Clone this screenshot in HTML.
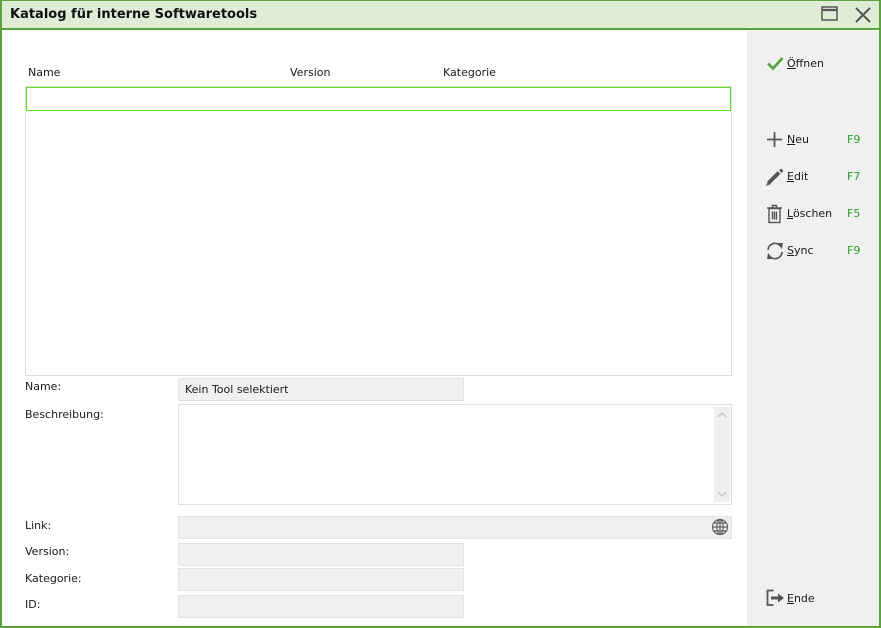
<!DOCTYPE html>
<html><head><meta charset="utf-8"><style>
*{box-sizing:border-box;margin:0;padding:0}
body{width:881px;height:628px;background:#fff;font-family:"DejaVu Sans","Liberation Sans",sans-serif;font-size:11px;color:#1a1a1a;position:relative;overflow:hidden}
.abs{position:absolute}
#frame{left:0;top:0;width:881px;height:628px;border:2px solid #5ba33b;border-top-width:1px}
#title{left:2px;top:1px;width:877px;height:29px;background:#dfecd6;border-bottom:2px solid #5ba33b}
#title span{position:absolute;left:8px;top:6px;font-size:13px;font-weight:bold;color:#111}
#side{left:747px;top:31px;width:132px;height:595px;background:#f0f0f0}
.lbl{font-size:11px}
.fld{background:#f0f0f0;border:1px solid #e2e2e2}
.btn{position:absolute;left:767px;font-size:11px}
.btn u{text-decoration:underline}
.fk{position:absolute;left:847px;color:#2a9d2a;font-size:11px}
svg{position:absolute}
</style></head><body>
<div id="title" class="abs"><span>Katalog für interne Softwaretools</span>
<svg style="left:819px;top:5px" width="18" height="16"><rect x="1" y="1" width="15" height="13" fill="none" stroke="#555" stroke-width="1.5"/><line x1="1" y1="4" x2="16" y2="4" stroke="#555" stroke-width="2.2"/></svg>
<svg style="left:852px;top:5px" width="18" height="18"><path d="M2 2L16 16M16 2L2 16" stroke="#555" stroke-width="2"/></svg>
</div>
<div id="side" class="abs"></div>
<div id="frame" class="abs"></div>

<div class="abs lbl" style="left:28px;top:66px">Name</div>
<div class="abs lbl" style="left:290px;top:66px">Version</div>
<div class="abs lbl" style="left:443px;top:66px">Kategorie</div>
<div class="abs" style="left:25px;top:86px;width:707px;height:290px;border:1px solid #dcdcdc"></div>
<div class="abs" style="left:26px;top:87px;width:705px;height:24px;border:1px solid #5fe01e"></div>

<div class="abs lbl" style="left:25px;top:380px">Name:</div>
<div class="abs fld" style="left:178px;top:378px;width:286px;height:23px"><span style="position:absolute;left:6px;top:4px">Kein Tool selektiert</span></div>
<div class="abs lbl" style="left:25px;top:408px">Beschreibung:</div>
<div class="abs" style="left:178px;top:404px;width:554px;height:101px;border:1px solid #e0e0e0"></div>
<div class="abs" style="left:714px;top:407px;width:16px;height:95px;background:#efefef"></div>
<svg style="left:716px;top:411px" width="12" height="8"><path d="M2 6L6 2L10 6" fill="none" stroke="#c4c4c4" stroke-width="1.3"/></svg>
<svg style="left:716px;top:490px" width="12" height="8"><path d="M2 2L6 6L10 2" fill="none" stroke="#c4c4c4" stroke-width="1.3"/></svg>
<div class="abs lbl" style="left:25px;top:519px">Link:</div>
<div class="abs fld" style="left:178px;top:516px;width:554px;height:23px"></div>
<svg style="left:710px;top:517px" width="20" height="20"><g fill="none" stroke="#666" stroke-width="1.3"><circle cx="10" cy="10" r="7.5"/><ellipse cx="10" cy="10" rx="3.2" ry="7.5"/><line x1="2.5" y1="10" x2="17.5" y2="10"/><line x1="10" y1="2.5" x2="10" y2="17.5"/><line x1="4" y1="6" x2="16" y2="6"/><line x1="4" y1="14" x2="16" y2="14"/></g></svg>
<div class="abs lbl" style="left:25px;top:545px">Version:</div>
<div class="abs fld" style="left:178px;top:543px;width:286px;height:23px"></div>
<div class="abs lbl" style="left:25px;top:572px">Kategorie:</div>
<div class="abs fld" style="left:178px;top:568px;width:286px;height:23px"></div>
<div class="abs lbl" style="left:25px;top:598px">ID:</div>
<div class="abs fld" style="left:178px;top:595px;width:286px;height:23px"></div>

<svg style="left:766px;top:55px" width="18" height="17"><path d="M2 8.5L7 13.5L16.5 3" fill="none" stroke="#4ea33a" stroke-width="2.6"/></svg>
<div class="btn" style="left:787px;top:57px"><u>Ö</u>ffnen</div>
<svg style="left:766px;top:131px" width="17" height="17"><path d="M8.5 1V16M1 8.5H16" stroke="#555" stroke-width="1.8"/></svg>
<div class="btn" style="left:787px;top:133px"><u>N</u>eu</div><div class="fk" style="top:133px">F9</div>
<svg style="left:765px;top:167px" width="20" height="20"><path d="M3.5 16L14 5.5" stroke="#555" stroke-width="3.8"/><path d="M15 2.5L17.5 5" stroke="#555" stroke-width="2.8"/><path d="M1 19L3 14L6 17Z" fill="#555"/></svg>
<div class="btn" style="left:787px;top:170px"><u>E</u>dit</div><div class="fk" style="top:170px">F7</div>
<svg style="left:766px;top:204px" width="18" height="20"><g fill="none" stroke="#555" stroke-width="1.4"><path d="M1 4H16M6.5 4V1.5H10.5V4"/><rect x="3" y="4.5" width="11" height="14"/><path d="M6.5 7.5V15.5M8.5 7.5V15.5M10.5 7.5V15.5"/></g></svg>
<div class="btn" style="left:787px;top:207px"><u>L</u>öschen</div><div class="fk" style="top:207px">F5</div>
<svg style="left:765px;top:241px" width="20" height="20"><g fill="none" stroke="#555" stroke-width="1.7"><path d="M3 9A7 7 0 0 1 15.5 5"/><path d="M17 11A7 7 0 0 1 4.5 15"/></g><path d="M12 2L18 2L17 8Z" fill="#555"/><path d="M8 18L2 18L3 12Z" fill="#555"/></svg>
<div class="btn" style="left:787px;top:244px"><u>S</u>ync</div><div class="fk" style="top:244px">F9</div>
<svg style="left:766px;top:589px" width="20" height="18"><path d="M7.5 1.5H1.5V16H7.5" fill="none" stroke="#555" stroke-width="1.8"/><path d="M5 7.5H12V4.5L18 9L12 13.5V10.5H5Z" fill="#555"/></svg>
<div class="btn" style="left:787px;top:592px"><u>E</u>nde</div>
</body></html>
